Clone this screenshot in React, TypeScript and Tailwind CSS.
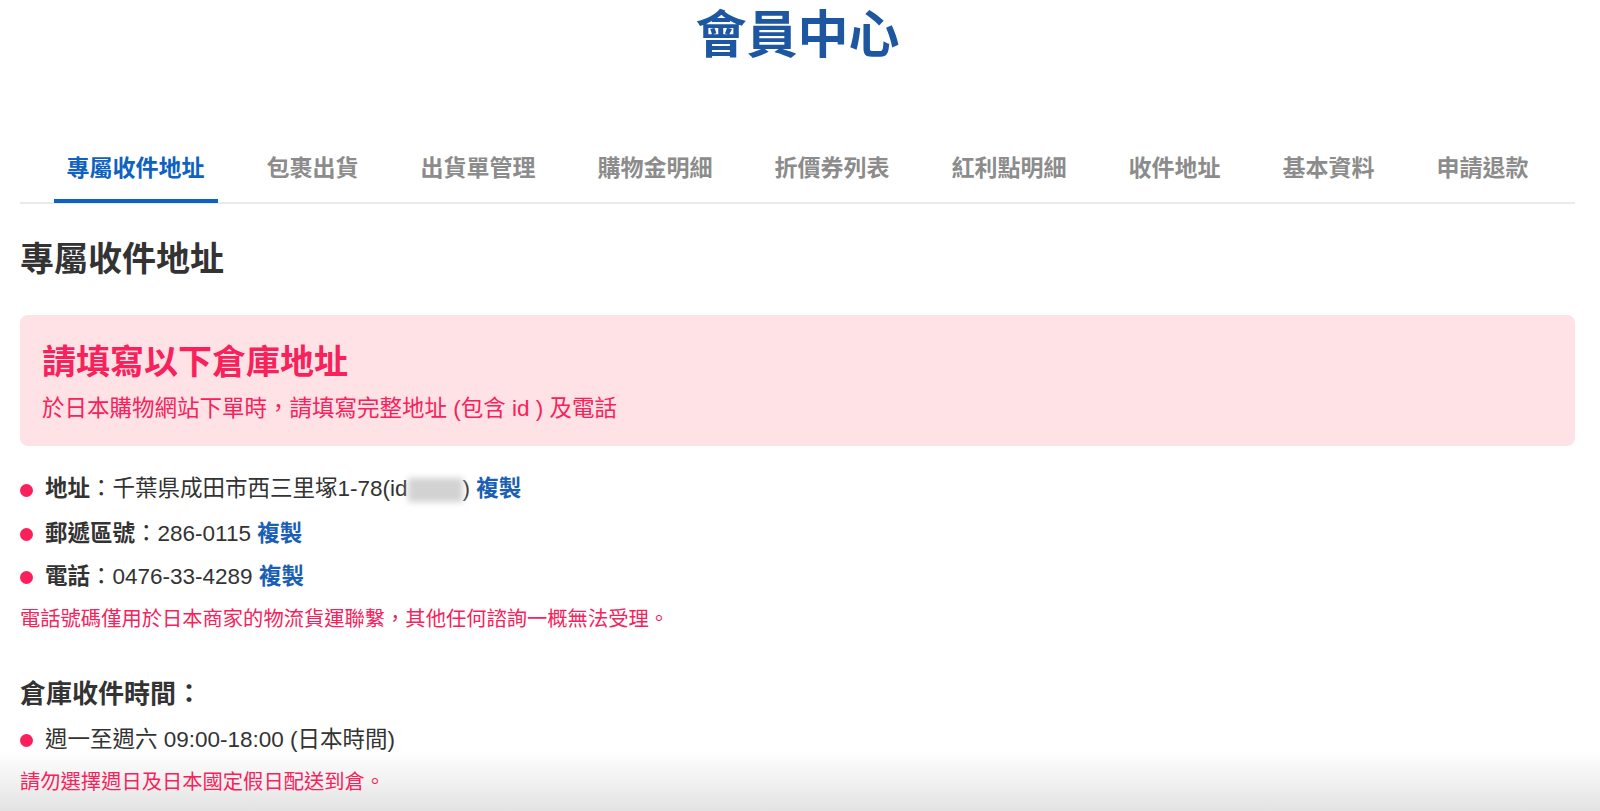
import React from "react";

const FONT = { fontFamily: '"Liberation Sans", "Noto Sans CJK TC", sans-serif' };

const tabs = ["專屬收件地址", "包裹出貨", "出貨單管理", "購物金明細", "折價券列表", "紅利點明細", "收件地址", "基本資料", "申請退款"];

function Dot() {
  return <span className="inline-block w-[13px] h-[13px] rounded-full bg-[#fb1f5c] shrink-0" />;
}

export default function App() {
  return (
    <div className="relative min-h-[811px] bg-white text-[#333333] overflow-hidden" style={FONT}>
      <div className="pointer-events-none absolute left-0 right-0 bottom-0 h-[60px] bg-linear-to-b from-white/0 to-[#e3e3e3]" />

      <div className="relative z-10 pl-[20px] pr-[25px]">
        <div className="pt-[10px] flex justify-center">
          <h1 className="text-[51px] leading-[51px] font-bold text-[#1d56a1]">會員中心</h1>
        </div>

        <nav className="mt-[96px] border-b-2 border-[#e9e9ee] flex justify-center gap-[36px]">
          {tabs.map((t, i) => (
            <div
              key={t}
              className={
                i === 0
                  ? "px-[13px] pb-[19px] -mb-[1px] border-b-4 border-[#0d63c4] text-[23px] leading-[23px] font-bold text-[#0f62bf]"
                  : "px-[13px] pb-[19px] -mb-[1px] border-b-4 border-transparent text-[23px] leading-[23px] font-bold text-[#8c8c8c]"
              }
            >
              {t}
            </div>
          ))}
        </nav>

        <h2 className="mt-[38px] text-[34px] leading-[34px] font-bold text-[#333333]">專屬收件地址</h2>

        <div className="mt-[39px] rounded-[8px] bg-[#ffe2e5] pl-[22px] pt-[30px] pb-[26px]">
          <div className="text-[34px] leading-[34px] font-bold text-[#f8215b]">請填寫以下倉庫地址</div>
          <div className="mt-[19px] text-[22.5px] leading-[22px] text-[#f8215b]">
            於日本購物網站下單時，請填寫完整地址 (包含 id ) 及電話
          </div>
        </div>

        <ul className="mt-[32px] flex flex-col gap-[21px]">
          <li className="flex items-center gap-[12px] text-[22.5px] leading-[22px]">
            <Dot />
            <span>
              <b className="font-bold">地址</b>：千葉県成田市西三里塚1-78(id
              <span className="inline-block align-middle w-[55px] h-[24px] bg-[#d2d2d2] blur-[3px]" />) <b className="font-bold text-[#1a5fb5] cursor-pointer">複製</b>
            </span>
          </li>
          <li className="flex items-center gap-[12px] text-[22.5px] leading-[22px]">
            <Dot />
            <span>
              <b className="font-bold">郵遞區號</b>：286-0115 <b className="font-bold text-[#1a5fb5] cursor-pointer">複製</b>
            </span>
          </li>
          <li className="flex items-center gap-[12px] text-[22.5px] leading-[22px]">
            <Dot />
            <span>
              <b className="font-bold">電話</b>：0476-33-4289 <b className="font-bold text-[#1a5fb5] cursor-pointer">複製</b>
            </span>
          </li>
        </ul>

        <p className="mt-[21px] text-[20.3px] leading-[20px] text-[#f8215b]">
          電話號碼僅用於日本商家的物流貨運聯繫，其他任何諮詢一概無法受理。
        </p>

        <h3 className="mt-[53px] text-[26px] leading-[25px] font-bold text-[#333333]">倉庫收件時間：</h3>

        <ul className="mt-[22px]">
          <li className="flex items-center gap-[12px] text-[22.5px] leading-[22px]">
            <Dot />
            <span>週一至週六 09:00-18:00 (日本時間)</span>
          </li>
        </ul>

        <p className="mt-[21px] text-[20.3px] leading-[20px] text-[#f8215b]">請勿選擇週日及日本國定假日配送到倉。</p>
      </div>
    </div>
  );
}
